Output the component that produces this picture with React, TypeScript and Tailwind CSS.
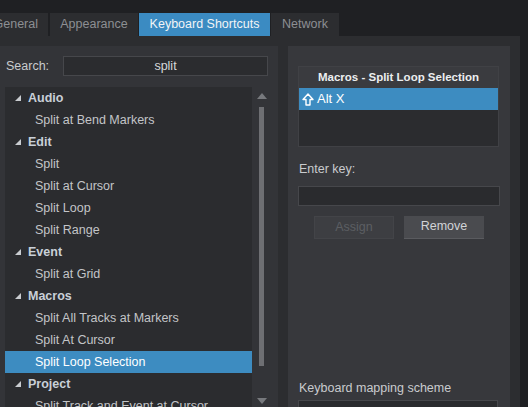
import React from "react";

type Row = { label: string; header?: boolean; selected?: boolean };

const rows: Row[] = [
  { label: "Audio", header: true },
  { label: "Split at Bend Markers" },
  { label: "Edit", header: true },
  { label: "Split" },
  { label: "Split at Cursor" },
  { label: "Split Loop" },
  { label: "Split Range" },
  { label: "Event", header: true },
  { label: "Split at Grid" },
  { label: "Macros", header: true },
  { label: "Split All Tracks at Markers" },
  { label: "Split At Cursor" },
  { label: "Split Loop Selection", selected: true },
  { label: "Project", header: true },
  { label: "Split Track and Event at Cursor" },
];

function Tri() {
  return (
    <svg width="6" height="6" viewBox="0 0 6 6" className="shrink-0">
      <polygon points="6,0 6,6 0,6" fill="#c9ccd0" />
    </svg>
  );
}

export default function App() {
  return (
    <div
      className="w-[528px] h-[407px] overflow-hidden bg-[#1f2023] text-[12px]"
      style={{ fontFamily: '"Liberation Sans", Arial, sans-serif' }}
    >
      <div className="h-[13px]" />
      <div className="flex h-[23px] text-[12.5px] text-[#8d8f93]">
        <div className="ml-[-12px] w-[60px] bg-[#2c2d30] flex items-center justify-end pr-[10px]">General</div>
        <div className="ml-[2px] w-[88px] bg-[#2c2d30] flex items-center justify-center">Appearance</div>
        <div className="ml-[1px] w-[131px] bg-[#3b8bc2] text-[#f2f4f6] flex items-center justify-center">Keyboard Shortcuts</div>
        <div className="ml-[1px] w-[68px] bg-[#2c2d30] flex items-center justify-center">Network</div>
      </div>
      <div className="flex w-[520px] h-[371px] bg-[#2c2d30] pt-[10px]">
        {/* Left panel */}
        <div className="w-[278px] bg-[#333438] flex flex-col">
          <div className="shrink-0 flex items-center h-[20px] mt-[10px]">
            <span className="ml-[6px] w-[57px] text-[12.5px] text-[#c9cbce]">Search:</span>
            <div className="w-[205px] h-[20px] bg-[#2b2c2f] border border-[#46474b] flex items-center justify-center text-[12.5px] text-[#d6d8db]">
              split
            </div>
          </div>
          <div className="shrink-0 flex mt-[11px] ml-[5px]">
            <div className="w-[247px] bg-[#2b2c2f]">
              {rows.map((r, i) => (
                <div
                  key={i}
                  className={
                    "h-[22px] flex items-center " +
                    (r.selected ? "bg-[#3d8cc1] text-white " : "") +
                    (r.header ? "font-bold text-[#c9d0d8] text-[12.5px]" : "text-[#c3c5c8] text-[12.5px]")
                  }
                >
                  {r.header ? (
                    <>
                      <span className="ml-[10px] mr-[7px] flex items-center">
                        <Tri />
                      </span>
                      <span>{r.label}</span>
                    </>
                  ) : (
                    <span className={"ml-[30px] " + (r.selected ? "text-white" : "")}>{r.label}</span>
                  )}
                </div>
              ))}
            </div>
            <div className="w-[14px] flex flex-col items-center">
              <div className="mt-[6px] ml-[5px]">
                <svg width="10" height="6" viewBox="0 0 10 6">
                  <polygon points="5,0 10,6 0,6" fill="#77797d" />
                </svg>
              </div>
              <div className="mt-[8px] ml-[5px] w-[5px] h-[259px] bg-[#6e6f73]" />
              <div className="mt-[32px] ml-[5px]">
                <svg width="10" height="6" viewBox="0 0 10 6">
                  <polygon points="0,0 10,0 5,6" fill="#77797d" />
                </svg>
              </div>
            </div>
          </div>
        </div>
        {/* Right panel */}
        <div className="ml-[10px] w-[222px] bg-[#37383c] flex flex-col">
          <div className="shrink-0 mt-[20px] ml-[10px] w-[201px] h-[81px] bg-[#2b2c2f] border border-[#404145] flex flex-col">
            <div className="shrink-0 h-[21px] bg-[#3a3b3f] flex items-center justify-center font-bold text-[11.5px] text-[#eceef0]">
              Macros - Split Loop Selection
            </div>
            <div className="shrink-0 h-[22px] bg-[#3d8cc1] text-white text-[13px] flex items-center pl-[3px]">
              <svg width="12" height="13" viewBox="0 0 12 13" className="mr-[3px]">
                <path d="M6 1 L11 6.5 L8 6.5 L8 12 L4 12 L4 6.5 L1 6.5 Z" fill="none" stroke="white" strokeWidth="1.4" strokeLinejoin="round" />
              </svg>
              Alt X
            </div>
          </div>
          <div className="shrink-0 ml-[11px] mt-[13px] text-[12.5px] text-[#c9cbce]">Enter key:</div>
          <div className="shrink-0 ml-[10px] mt-[7px] w-[202px] h-[20px] bg-[#2a2b2e] border border-[#46474b]" />
          <div className="shrink-0 flex mt-[10px] ml-[26px] gap-[10px]">
            <div className="w-[80px] h-[23px] bg-[#3d3e42] border border-[#434448] flex items-center justify-center text-[12.5px] text-[#5c5e62]">
              Assign
            </div>
            <div className="w-[80px] h-[23px] bg-[#4a4b4f] border-b border-[#5a5b5f] flex items-center justify-center text-[12.5px] text-[#d2d4d7]">
              Remove
            </div>
          </div>
          <div className="shrink-0 ml-[11px] mt-[140px] text-[12.5px] text-[#c9cbce]">Keyboard mapping scheme</div>
          <div className="shrink-0 ml-[10px] mt-[2px] w-[200px] h-[20px] border border-[#46474b] bg-[#2a2b2e]" />
        </div>
      </div>
    </div>
  );
}
